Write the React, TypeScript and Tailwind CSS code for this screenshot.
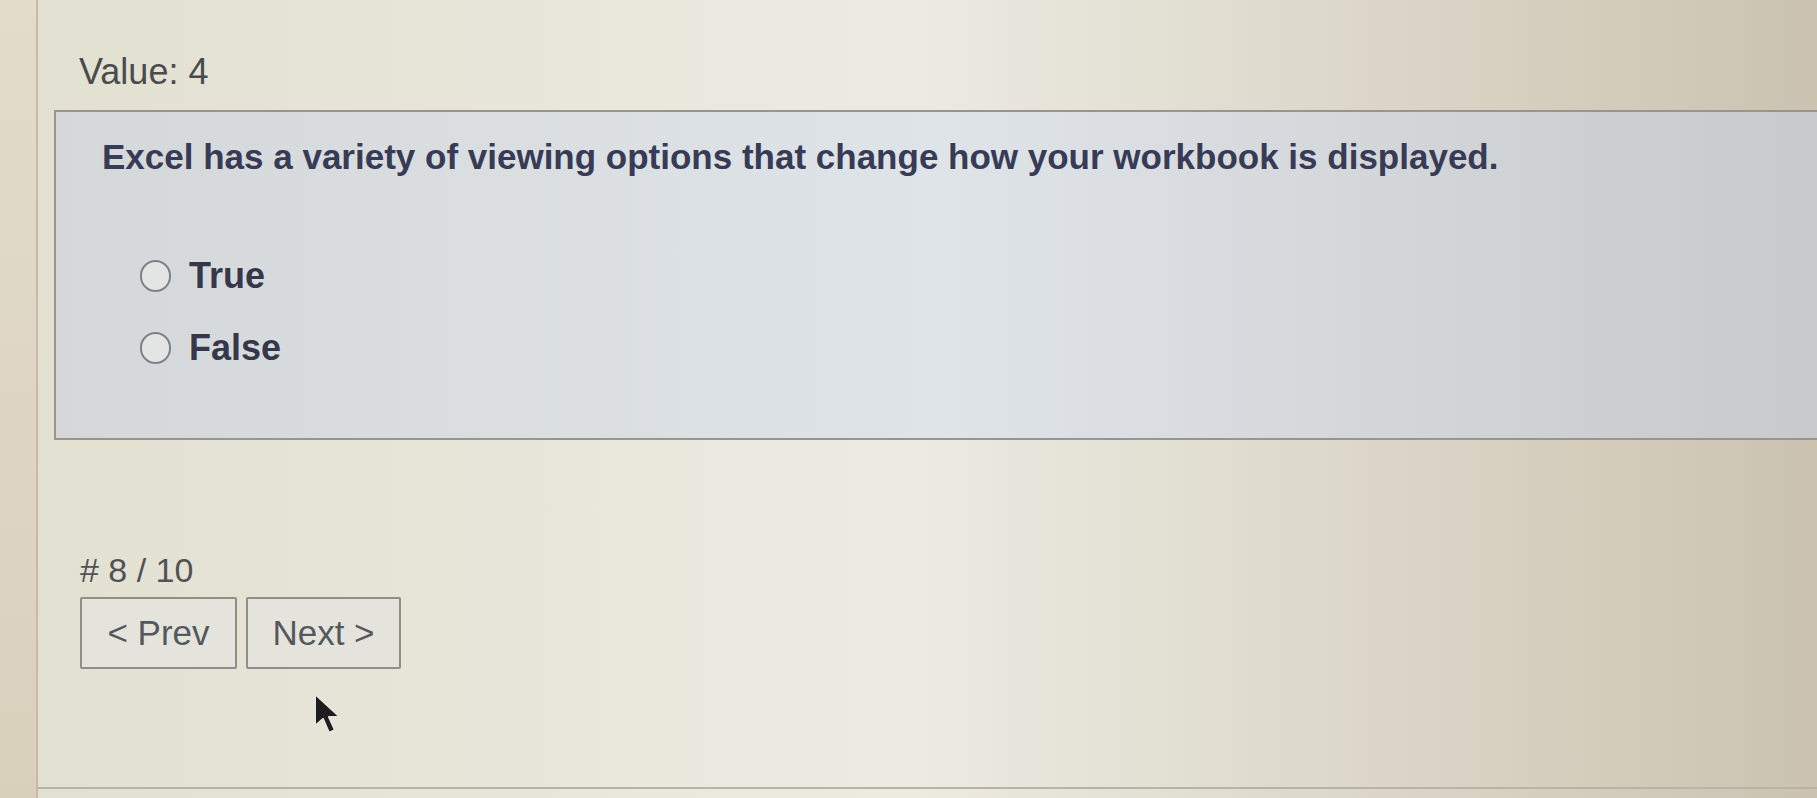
import React from 'react';

function Radio({ label }: { label: string }) {
  return (
    <label className="flex h-[40px] items-center">
      <span className="h-[32px] w-[31px] rounded-full border-2 border-[#7f8285] bg-[#e2e5e4]" />
      <span className="ml-[18px] text-[36px] font-bold leading-[40px] text-[#36384a]">{label}</span>
    </label>
  );
}

function Cursor() {
  return (
    <svg className="absolute left-[312px] top-[692px]" width="36" height="46" viewBox="0 0 36 46">
      <path d="M3 2 L3 34 L11 27 L17 41 L23 38 L17 25 L28 25 Z" fill="#1d1d1f" stroke="#e7e6dc" strokeWidth="2" strokeLinejoin="round" />
    </svg>
  );
}

export default function App() {
  return (
    <div className="relative flex h-[798px] w-full overflow-hidden bg-linear-to-r from-[#e2e0d0] via-[#ecebe2] to-[#cbc3b0] font-['Liberation_Sans',Arial,sans-serif]">
      {/* left margin of the screen */}
      <div className="w-[38px] shrink-0 border-r-2 border-[#c9b9ab] bg-linear-to-b from-[#e4dccb] to-[#d9d0bc]" />

      <div className="flex h-[789px] min-w-0 flex-1 flex-col border-b-2 border-[#b7b3a6] pl-[16px] pt-[52px]">
        <div className="ml-[25px] text-[36px] leading-[40px] text-[#4a4b4d]">Value: 4</div>

        <div className="mt-[18px] -mr-[20px] h-[330px] border-l-2 border-t-2 border-b-2 border-[#9c928e] bg-linear-to-r from-[#d4d8d9] via-[#dfe4e9] to-[#c7c9ca] pl-[46px] pt-[25px]">
          <p className="text-[35px] font-bold leading-[40px] text-[#383b55]">
            Excel has a variety of viewing options that change how your workbook is displayed.
          </p>
          <div className="mt-[79px] flex flex-col gap-[32px] pl-[38px]">
            <Radio label="True" />
            <Radio label="False" />
          </div>
        </div>

        <div className="ml-[26px] mt-[110px] text-[34px] leading-[40px] text-[#505255]">
          # 8 / 10
        </div>

        <div className="ml-[26px] mt-[7px] flex gap-[9px]">
          <button className="h-[72px] w-[157px] rounded-[2px] border-2 border-[#8e8e8a] bg-[#e4e4dc] text-[35px] text-[#55585c]">
            &lt; Prev
          </button>
          <button className="h-[72px] w-[155px] rounded-[2px] border-2 border-[#8e8e8a] bg-[#e4e4dc] text-[35px] text-[#55585c]">
            Next &gt;
          </button>
        </div>
      </div>

      <Cursor />
    </div>
  );
}
